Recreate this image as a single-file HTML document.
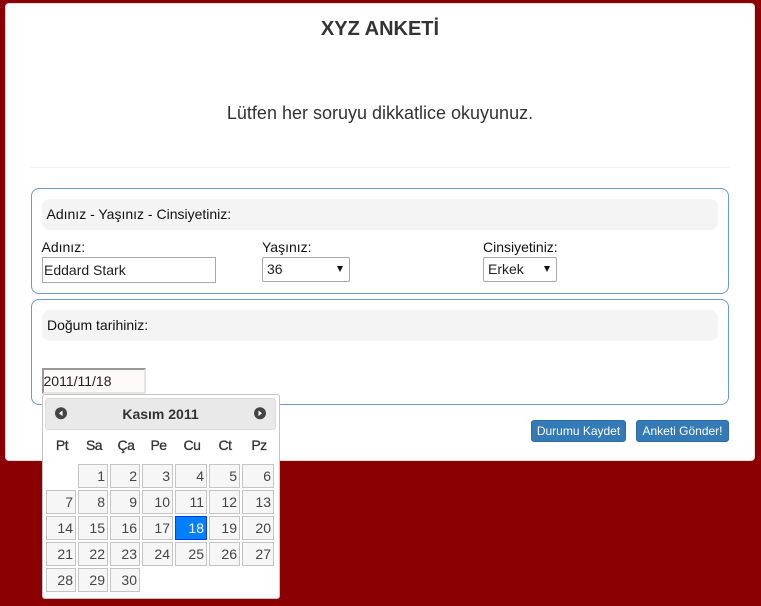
<!DOCTYPE html>
<html><head><meta charset="utf-8">
<style>
html,body{margin:0;padding:0;width:761px;height:606px;overflow:hidden;background:#8b0000;font-family:"Liberation Sans",sans-serif;color:#333;}
.a{position:absolute;box-sizing:border-box;white-space:nowrap;}
.t{font-size:14px;line-height:20px;color:#111;}
.pan{border:1px solid #6b9bd0;border-radius:8px;background:#fff;}
.g{background:#f4f4f4;border-radius:8px;}
.sel{border:1px solid #aaa;border-radius:2px;background:#fff;font-size:14px;line-height:22px;color:#222;}
.arr{width:0;height:0;border-left:3px solid transparent;border-right:3px solid transparent;border-top:6px solid #111;}
.btn{background:#337ab7;border:1px solid #2e6da4;border-radius:3px;color:#fff;font-size:12px;line-height:21px;text-align:center;}
.c{background:#f6f6f6;border:1px solid #c5c5c5;color:#454545;font-size:14px;line-height:22px;text-align:right;padding-right:2px;}
.on{background:#007fff;border-color:#003eff;color:#fff;}
.d{font-size:14px;font-weight:normal;letter-spacing:-.5px;-webkit-text-stroke:.3px #333;line-height:20px;text-align:center;color:#333;}
</style></head><body>
<div class="a" style="left:5px;top:3px;width:750px;height:458px;background:#fff;border-radius:4px;border:1px solid #ddd"></div>

<div class="a" style="left:5px;top:18px;width:750px;text-align:center;font-size:20px;font-weight:bold;line-height:22px;color:#333">XYZ ANKETİ</div>
<div class="a" style="left:5px;top:101px;width:750px;text-align:center;font-size:18px;line-height:24px;color:#333">Lütfen her soruyu dikkatlice okuyunuz.</div>
<div class="a" style="left:31px;top:167px;width:698px;height:1px;background:#eee"></div>

<div class="a pan" style="left:31px;top:188px;width:698px;height:106px"></div>
<div class="a g" style="left:42px;top:199px;width:676px;height:31px"></div>
<div class="a t" style="left:46.500px;top:204px">Adınız - Yaşınız - Cinsiyetiniz:</div>
<div class="a t" style="left:41.500px;top:237px">Adınız:</div>
<div class="a" style="left:42px;top:257px;width:174px;height:26px;border:1px solid #aaa;font-size:14px;line-height:24px;padding-left:1px;color:#222">Eddard Stark</div>
<div class="a t" style="left:262px;top:237px">Yaşınız:</div>
<div class="a sel" style="left:262px;top:257px;width:88px;height:25px;padding-left:4px">36</div>
<div class="a arr" style="left:337px;top:265.500px"></div>
<div class="a t" style="left:483px;top:237px">Cinsiyetiniz:</div>
<div class="a sel" style="left:483px;top:257px;width:74px;height:25px;padding-left:4px">Erkek</div>
<div class="a arr" style="left:544px;top:265.500px"></div>

<div class="a pan" style="left:31px;top:299px;width:698px;height:106px"></div>
<div class="a g" style="left:42px;top:310px;width:676px;height:31px"></div>
<div class="a t" style="left:47px;top:315px">Doğum tarihiniz:</div>
<div class="a" style="left:42px;top:368px;width:104px;height:26px;background:#fdf9f8;border:2px solid;border-color:#999 #e4e4e4 #e4e4e4 #999;font-size:14px;line-height:22px;color:#222;text-indent:-.5px">2011/11/18</div>

<div class="a btn" style="left:531px;top:420px;width:95px;height:22px">Durumu Kaydet</div>
<div class="a btn" style="left:636px;top:420px;width:93px;height:22px">Anketi Gönder!</div>

<div class="a" style="left:42px;top:394px;width:238px;height:205px;background:#fff;border:1px solid #c5c5c5;border-radius:3px"></div>
<div class="a" style="left:45px;top:398px;width:231px;height:32px;background:#e9e9e9;border:1px solid #ddd;border-radius:3px"></div>
<div class="a" style="left:45px;top:404px;width:231px;text-align:center;font-size:14px;font-weight:bold;line-height:20px;color:#333">Kasım 2011</div>
<svg class="a" style="left:54px;top:406px" width="14" height="14"><circle cx="7" cy="7.300" r="6" fill="#454545"/><path d="M8.500 4.500v5.600L5 7.300z" fill="#fff"/></svg>
<svg class="a" style="left:253px;top:406px" width="14" height="14"><circle cx="7" cy="7.300" r="6" fill="#454545"/><path d="M5.500 4.500v5.600L9 7.300z" fill="#fff"/></svg>

<div class="a d" style="left:47px;top:435px;width:30px">Pt</div>
<div class="a d" style="left:79px;top:435px;width:30px">Sa</div>
<div class="a d" style="left:111px;top:435px;width:30px">Ça</div>
<div class="a d" style="left:143px;top:435px;width:31px">Pe</div>
<div class="a d" style="left:176px;top:435px;width:32px">Cu</div>
<div class="a d" style="left:210px;top:435px;width:30px">Ct</div>
<div class="a d" style="left:243px;top:435px;width:32px">Pz</div>

<div class="a c" style="left:78px;top:464px;width:30px;height:24px">1</div>
<div class="a c" style="left:110px;top:464px;width:30px;height:24px">2</div>
<div class="a c" style="left:142px;top:464px;width:31px;height:24px">3</div>
<div class="a c" style="left:175px;top:464px;width:32px;height:24px">4</div>
<div class="a c" style="left:209px;top:464px;width:31px;height:24px">5</div>
<div class="a c" style="left:242px;top:464px;width:32px;height:24px">6</div>

<div class="a c" style="left:46px;top:490px;width:30px;height:24px">7</div>
<div class="a c" style="left:78px;top:490px;width:30px;height:24px">8</div>
<div class="a c" style="left:110px;top:490px;width:30px;height:24px">9</div>
<div class="a c" style="left:142px;top:490px;width:31px;height:24px">10</div>
<div class="a c" style="left:175px;top:490px;width:32px;height:24px">11</div>
<div class="a c" style="left:209px;top:490px;width:31px;height:24px">12</div>
<div class="a c" style="left:242px;top:490px;width:32px;height:24px">13</div>

<div class="a c" style="left:46px;top:516px;width:30px;height:24px">14</div>
<div class="a c" style="left:78px;top:516px;width:30px;height:24px">15</div>
<div class="a c" style="left:110px;top:516px;width:30px;height:24px">16</div>
<div class="a c" style="left:142px;top:516px;width:31px;height:24px">17</div>
<div class="a c on" style="left:175px;top:516px;width:32px;height:24px">18</div>
<div class="a c" style="left:209px;top:516px;width:31px;height:24px">19</div>
<div class="a c" style="left:242px;top:516px;width:32px;height:24px">20</div>

<div class="a c" style="left:46px;top:542px;width:30px;height:24px">21</div>
<div class="a c" style="left:78px;top:542px;width:30px;height:24px">22</div>
<div class="a c" style="left:110px;top:542px;width:30px;height:24px">23</div>
<div class="a c" style="left:142px;top:542px;width:31px;height:24px">24</div>
<div class="a c" style="left:175px;top:542px;width:32px;height:24px">25</div>
<div class="a c" style="left:209px;top:542px;width:31px;height:24px">26</div>
<div class="a c" style="left:242px;top:542px;width:32px;height:24px">27</div>

<div class="a c" style="left:46px;top:568px;width:30px;height:24px">28</div>
<div class="a c" style="left:78px;top:568px;width:30px;height:24px">29</div>
<div class="a c" style="left:110px;top:568px;width:30px;height:24px">30</div>
</body></html>
